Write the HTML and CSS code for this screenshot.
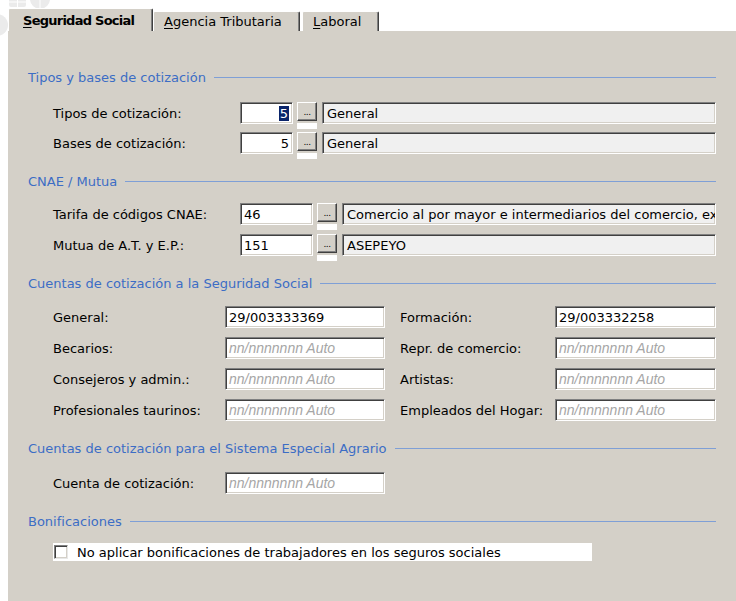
FILE: index.html
```html
<!DOCTYPE html>
<html lang="es">
<head>
<meta charset="utf-8">
<title>Datos de cotización</title>
<link rel="stylesheet" href="styles.css">
</head>
<body>
<div class="screen">
  <svg class="watermark" width="60" height="44" viewBox="0 0 60 44" aria-hidden="true">
    <circle cx="40" cy="-1" r="10" fill="#ebebeb"/>
    <path d="M40 -11V9M30 -1H50" stroke="#fff" stroke-width="1"/>
    <rect x="9" y="-4" width="17" height="11" rx="2" fill="#ebebeb"/>
    <path d="M17.5 -4V7M9 2H26" stroke="#fff" stroke-width="1"/>
    <circle cx="-3" cy="25" r="11" fill="#ebebeb"/>
  </svg>

  <nav class="tabs">
    <div class="tab tab-active"><u>S</u>eguridad Social</div>
    <div class="tab tab-tax"><u>A</u>gencia Tributaria</div>
    <div class="tab tab-labor"><u>L</u>aboral</div>
  </nav>

  <main class="panel">
    <section class="group g-tipos">
      <div class="legend">Tipos y bases de cotización</div>
      <div class="row">
        <span class="lbl">Tipos de cotización:</span>
        <span class="edit edit-code"><span class="sel">5</span></span>
        <span class="lookup"><span class="lookup-btn">...</span><span class="lookup-pad"></span></span>
        <span class="edit edit-desc">General</span>
      </div>
      <div class="row">
        <span class="lbl">Bases de cotización:</span>
        <span class="edit edit-code">5</span>
        <span class="lookup"><span class="lookup-btn">...</span><span class="lookup-pad"></span></span>
        <span class="edit edit-desc">General</span>
      </div>
    </section>

    <section class="group g-cnae">
      <div class="legend">CNAE / Mutua</div>
      <div class="row">
        <span class="lbl">Tarifa de códigos CNAE:</span>
        <span class="edit edit-code-wide">46</span>
        <span class="lookup"><span class="lookup-btn">...</span><span class="lookup-pad"></span></span>
        <span class="edit edit-desc">Comercio al por mayor e intermediarios del comercio, excepto de vehículos de motor y motocicletas</span>
      </div>
      <div class="row">
        <span class="lbl">Mutua de A.T. y E.P.:</span>
        <span class="edit edit-code-wide">151</span>
        <span class="lookup"><span class="lookup-btn">...</span><span class="lookup-pad"></span></span>
        <span class="edit edit-desc">ASEPEYO</span>
      </div>
    </section>

    <section class="group g-cuentas">
      <div class="legend">Cuentas de cotización a la Seguridad Social</div>
      <div class="row">
        <span class="lbl">General:</span>
        <span class="edit edit-account">29/003333369</span>
        <span class="lbl lbl-2">Formación:</span>
        <span class="edit edit-fill">29/003332258</span>
      </div>
      <div class="row">
        <span class="lbl">Becarios:</span>
        <span class="edit edit-account"><span class="ph">nn/nnnnnnn Auto</span></span>
        <span class="lbl lbl-2">Repr. de comercio:</span>
        <span class="edit edit-fill"><span class="ph">nn/nnnnnnn Auto</span></span>
      </div>
      <div class="row">
        <span class="lbl">Consejeros y admin.:</span>
        <span class="edit edit-account"><span class="ph">nn/nnnnnnn Auto</span></span>
        <span class="lbl lbl-2">Artistas:</span>
        <span class="edit edit-fill"><span class="ph">nn/nnnnnnn Auto</span></span>
      </div>
      <div class="row">
        <span class="lbl">Profesionales taurinos:</span>
        <span class="edit edit-account"><span class="ph">nn/nnnnnnn Auto</span></span>
        <span class="lbl lbl-2">Empleados del Hogar:</span>
        <span class="edit edit-fill"><span class="ph">nn/nnnnnnn Auto</span></span>
      </div>
    </section>

    <section class="group g-agrario">
      <div class="legend">Cuentas de cotización para el Sistema Especial Agrario</div>
      <div class="row">
        <span class="lbl">Cuenta de cotización:</span>
        <span class="edit edit-account"><span class="ph">nn/nnnnnnn Auto</span></span>
      </div>
    </section>

    <section class="group g-bonif">
      <div class="legend">Bonificaciones</div>
      <label class="check-row">
        <span class="check-box"></span>
        <span>No aplicar bonificaciones de trabajadores en los seguros sociales</span>
      </label>
    </section>
  </main>
</div>
</body>
</html>
```

FILE: styles.css
```css
* { box-sizing: border-box; }

html, body {
  margin: 0;
  padding: 0;
  background: #fff;
}

body {
  font-family: "DejaVu Sans", Tahoma, Verdana, sans-serif;
  font-size: 13px;
  color: #000;
}

.screen {
  position: relative;
  width: 736px;
  height: 601px;
  overflow: hidden;
  display: flex;
  flex-direction: column;
  padding: 8px 0 0 8px;
}

/* faint application emblem peeking behind the tab strip */
.watermark {
  position: absolute;
  left: 0;
  top: 0;
}

/* ---- tab strip ---- */
.tabs {
  position: relative;
  display: flex;
  align-items: flex-end;
  height: 23px;
  flex: none;
}

.tab {
  flex: none;
  height: 20px;
  display: flex;
  align-items: center;
  padding-left: 10px;
  background: #d4d0c8;
  border-top: 1px solid #fff;
  border-left: 1px solid #fff;
  border-right: 1px solid #404040;
  box-shadow: inset -1px 0 0 #808080;
  border-radius: 2px 2px 0 0;
  white-space: nowrap;
}

.tab u {
  text-decoration: underline;
  text-underline-offset: 2px;
}

.tab-active {
  height: 23px;
  width: 145px;
  padding-left: 14px;
  font-weight: bold;
  letter-spacing: -0.75px;
}

.tab-tax { width: 147px; }

.tab-labor {
  width: 77px;
  margin-left: 2px;
}

/* ---- page body ---- */
.panel {
  flex: 1;
  background: #d4d0c8;
  padding: 38px 20px 0 20px;
}

.group + .group { margin-top: 19px; }

.legend {
  display: flex;
  align-items: center;
  gap: 8px;
  height: 16px;
  color: #3c6dc5;
  white-space: nowrap;
}

.legend::after {
  content: "";
  flex: 1;
  height: 1px;
  background: #7f9fd6;
}

.row {
  display: flex;
  align-items: center;
  height: 22px;
  padding-left: 25px;
  margin-top: 9px;
}

.g-tipos .row { margin-top: 8px; }
.legend + .row { margin-top: 15px; }
.g-tipos .legend + .row { margin-top: 17px; }
.g-cnae .legend + .row { margin-top: 14px; }
.g-agrario .legend + .row { margin-top: 16px; }

.lbl {
  flex: none;
  width: 187px;
  white-space: nowrap;
}

.g-cuentas .lbl,
.g-agrario .lbl { width: 172px; }

.g-cuentas .lbl-2 {
  width: 155px;
  margin-left: 15px;
}

/* sunken edit box */
.edit {
  flex: none;
  height: 22px;
  display: flex;
  align-items: center;
  padding: 0 3px;
  background: #fff;
  border: 1px solid;
  border-color: #808080 #fff #fff #808080;
  box-shadow: inset 1px 1px 0 #404040, inset -1px -1px 0 #d4d0c8;
  white-space: nowrap;
  overflow: hidden;
}

.edit-code {
  width: 53px;
  justify-content: flex-end;
}

.edit-code-wide { width: 73px; }

.edit-desc {
  flex: 1;
  min-width: 0;
  background: #f0f0f0;
  padding-left: 4px;
}

.edit-account { width: 160px; }

.edit-fill { flex: 1; }

.sel {
  background: #0a246a;
  color: #fff;
  padding: 0 1px;
  line-height: 15px;
}

.ph {
  font-family: "Liberation Sans", Arial, sans-serif;
  font-style: italic;
  font-size: 14px;
  color: #a6a6a6;
}

/* "..." lookup button */
.lookup {
  flex: none;
  align-self: flex-start;
  width: 20px;
  height: 22px;
  margin: 0 5px 0 4px;
  display: flex;
  flex-direction: column;
}

.lookup-btn {
  flex: none;
  height: 19px;
  display: flex;
  align-items: flex-end;
  justify-content: center;
  padding-bottom: 3px;
  background: #d4d0c8;
  border: 1px solid;
  border-color: #fff #404040 #404040 #fff;
  box-shadow: inset -1px -1px 0 #808080;
  font-size: 9px;
  line-height: 9px;
  letter-spacing: -0.5px;
}

.lookup-pad {
  flex: none;
  height: 6px;
  margin-top: 2px;
  background: #fff;
}

/* checkbox line */
.check-row {
  display: flex;
  align-items: center;
  gap: 9px;
  width: 539px;
  height: 18px;
  margin: 14px 0 0 25px;
  padding-left: 1px;
  background: #fff;
  white-space: nowrap;
}

.check-box {
  flex: none;
  width: 14px;
  height: 14px;
  background: #fff;
  border: 1px solid;
  border-color: #808080 #e8e8e8 #e8e8e8 #808080;
  box-shadow: inset 1px 1px 0 #404040, inset -1px -1px 0 #d4d0c8;
}
```
